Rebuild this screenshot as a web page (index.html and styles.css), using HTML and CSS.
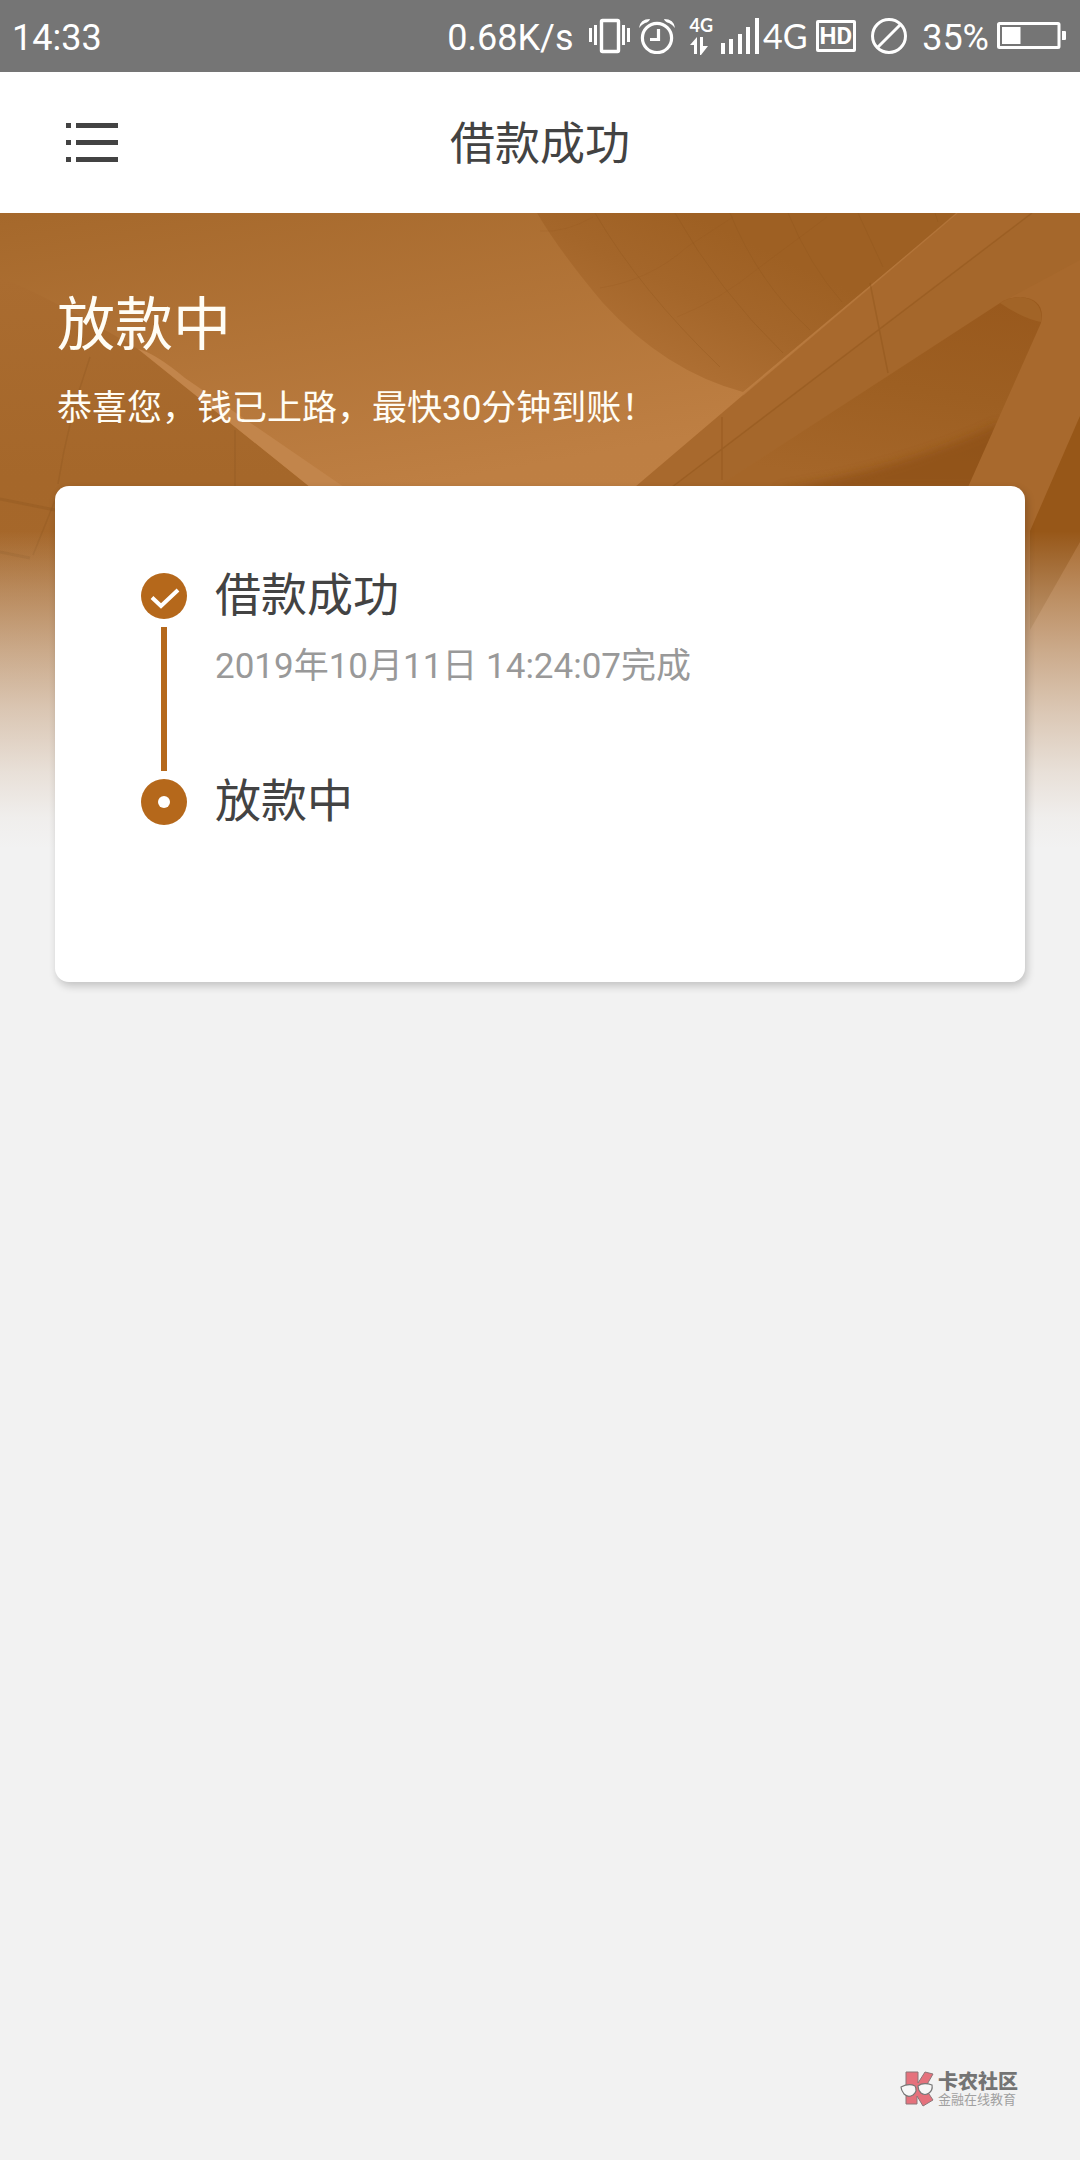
FILE: index.html
```html
<!DOCTYPE html>
<html lang="zh-CN">
<head>
<meta charset="utf-8">
<meta name="viewport" content="width=device-width, initial-scale=1">
<title>借款成功</title>
<link rel="stylesheet" href="styles.css">
</head>
<body>
<div class="page">
  <div class="status">
    <span class="status-text">14:33</span>
    <div class="status-right">
      <span class="status-text">0.68K/s</span>
      <div class="status-group">
        <svg width="42" height="36" viewBox="0 0 42 36" fill="#fff" aria-hidden="true">
          <path d="M0 10h3v14H0zM5 7h3v20H5zM33 7h3v20h-3zM38 10h3v14h-3z"/>
          <rect x="12.5" y="2.5" width="17" height="31" rx="1" fill="none" stroke="#fff" stroke-width="3.4"/>
        </svg>
        <svg width="36" height="36" viewBox="0 0 36 36" fill="none" stroke="#fff" stroke-width="3.2" aria-hidden="true">
          <circle cx="18" cy="20" r="14.6"/>
          <path d="M19.500 11v10.500h-8.500"/>
          <path d="M0 10Q1 1 11 1Q10 4 6 5Q2 7 0 10zM36 10Q35 1 25 1Q26 4 30 5Q34 7 36 10z" fill="#fff" stroke="none"/>
        </svg>
      </div>
      <div class="status-group">
        <div class="data">
          <span class="data-label">4G</span>
          <svg width="18" height="18" viewBox="0 0 18 18" fill="#fff" aria-hidden="true">
            <path d="M7 0v17H4V8H0zM10 0h3v9h5l-7 9h-1z"/>
          </svg>
        </div>
        <svg width="38" height="36" viewBox="0 0 38 36" fill="#fff" aria-hidden="true">
          <path d="M0 25h4v11H0zM8 21h4v15H8zM17 16h4v20h-4zM25 9h4v27h-4zM34 0h4v36h-4z"/>
        </svg>
        <span class="network">4G</span>
        <span class="hd">HD</span>
      </div>
      <svg width="36" height="36" viewBox="0 0 36 36" fill="none" stroke="#fff" stroke-width="3" aria-hidden="true">
        <circle cx="18" cy="18" r="16.500"/><path d="M6.500 29.500l23-23"/>
      </svg>
      <div class="status-group">
        <span class="status-text">35%</span>
        <svg width="69" height="28" viewBox="0 0 69 28" fill="#fff" aria-hidden="true">
          <rect x="1.500" y="1.500" width="60.500" height="24" rx="1" fill="none" stroke="#fff" stroke-width="3"/>
          <path d="M5 5h18.500v17H5zM65 9h3q1 0 1 1v7q0 1-1 1h-3z"/>
        </svg>
      </div>
    </div>
  </div>

  <header class="header">
    <button class="menu" type="button" aria-label="菜单">
      <svg width="52" height="40" viewBox="0 0 52 40" fill="#434343" aria-hidden="true">
        <path d="M0 0h5v5H0zM10 0h42v5H10zM0 17h5v5H0zM10 17h42v5H10zM0 34h5v5H0zM10 34h42v5H10z"/>
      </svg>
    </button>
    <h1 class="title">借款成功</h1>
  </header>

  <main class="main">
    <svg class="backdrop" viewBox="0 213 1080 635" preserveAspectRatio="none" aria-hidden="true">
      <defs>
        <linearGradient id="sky" x1="0" y1="0" x2=".3" y2="1">
          <stop offset="0" stop-color="#a5682b"/><stop offset=".5" stop-color="#be7f43"/><stop offset="1" stop-color="#c08044"/>
        </linearGradient>
        <linearGradient id="globe" x1="0" y1=".5" x2=".45" y2=".1">
          <stop offset="0" stop-color="#ae6f33"/><stop offset=".5" stop-color="#a4662a"/><stop offset="1" stop-color="#9e6023"/>
        </linearGradient>
        <linearGradient id="hollow" x1=".8" y1="0" x2=".5" y2="1">
          <stop offset="0" stop-color="#99591d"/><stop offset=".5" stop-color="#9d5f22"/><stop offset="1" stop-color="#a56629"/>
        </linearGradient>
        <linearGradient id="wall" x1="0" y1="0" x2="0" y2="1">
          <stop offset="0" stop-color="#aa6c30"/><stop offset=".35" stop-color="#a5672a"/><stop offset="1" stop-color="#a8682c"/>
        </linearGradient>
        <linearGradient id="fade" x1="0" y1="0" x2="0" y2="1">
          <stop offset=".5" stop-color="#f2f2f2" stop-opacity="0"/>
          <stop offset=".59" stop-color="#f2f2f2" stop-opacity=".24"/>
          <stop offset=".69" stop-color="#f2f2f2" stop-opacity=".48"/>
          <stop offset=".78" stop-color="#f2f2f2" stop-opacity=".68"/>
          <stop offset=".88" stop-color="#f2f2f2" stop-opacity=".87"/>
          <stop offset=".95" stop-color="#f2f2f2" stop-opacity=".97"/>
          <stop offset="1" stop-color="#f2f2f2"/>
        </linearGradient>
        <filter id="soft" x="-10%" y="-30%" width="120%" height="160%"><feGaussianBlur stdDeviation="5"/></filter>
        <clipPath id="hollow-clip"><path d="M717 487L1000 303Q1010 297 1021 297Q1046 299 1041 323L968 487z"/></clipPath>
      </defs>
      <rect y="213" width="1080" height="635" fill="url(#sky)"/>
      <path d="M537 213Q560 252 603 303Q665 371 743 392L957 213z" fill="url(#globe)"/>
      <g fill="none" stroke="#8f551d" stroke-opacity=".35">
        <path d="M595 213Q640 290 720 367M675 213Q718 290 783 353M730 213Q758 282 810 330M788 213Q810 266 842 302M858 213L883 267M935 213L938 222"/>
        <path d="M540 231Q565 233 593 217M600 288Q650 280 687 247L733 217M677 317Q720 300 760 267L827 217" stroke-opacity=".18"/>
      </g>
      <path d="M635 487L957 213H1080V848H635z" fill="#a8692d"/>
      <path d="M743 395L957 213" stroke="#b87a3f" stroke-opacity=".6" stroke-width="1.500"/>
      <path d="M672 487L1032 213L1080 213V260L1000 303L717 487z" fill="#a5672b"/>
      <path d="M672 487L1032 213M870 283L888 373M722 417V480" fill="none" stroke="#8c5219" stroke-opacity=".4" stroke-width="1.500"/>
      <path d="M717 487L1000 303Q1010 297 1021 297Q1046 299 1041 323L968 487z" fill="url(#hollow)"/>
      <path d="M1000 303Q1010 297 1021 297Q1044 300 1041 322Q1022 318 1000 303z" fill="#a26427"/>
      <g clip-path="url(#hollow-clip)">
        <path d="M775 490Q905 468 1000 423V490z" fill="#8d4f14" filter="url(#soft)" opacity=".75"/>
      </g>
      <path d="M1080 416L1030 531V630L1080 542z" fill="#975718"/>
      <path d="M0 277Q55 300 138 349L310 487V848H0z" fill="url(#wall)"/>
      <path d="M138 349Q155 353 185 378L344 487H310z" fill="#c2854b"/>
      <g fill="none" stroke="#8a511b" stroke-opacity=".28" stroke-width="1.500">
        <path d="M90 357Q68 420 58 484M235 430V487M60 488L33 555"/>
        <path d="M0 499L55 510M0 552L30 558" stroke-width="3"/>
      </g>
      <rect y="213" width="1080" height="636" fill="url(#fade)"/>
    </svg>

    <section class="intro">
      <h2 class="intro-title">放款中</h2>
      <p class="intro-text">恭喜您，钱已上路，最快30分钟到账！</p>
    </section>

    <ol class="card">
      <li class="step">
        <div class="rail">
          <svg width="46" height="46" viewBox="0 0 46 46" aria-hidden="true">
            <circle cx="23" cy="23" r="23" fill="#b5681b"/>
            <path d="M11 24.500l9 8.500l17-16" fill="none" stroke="#fff" stroke-width="4"/>
          </svg>
          <span class="line"></span>
        </div>
        <div class="step-body">
          <h3 class="step-title">借款成功</h3>
          <p class="step-time">2019年10月11日 14:24:07完成</p>
        </div>
      </li>
      <li class="step">
        <div class="rail">
          <svg width="46" height="46" viewBox="0 0 46 46" aria-hidden="true">
            <circle cx="23" cy="23" r="23" fill="#b5681b"/><circle cx="23" cy="23" r="6" fill="#fff"/>
          </svg>
        </div>
        <div class="step-body">
          <h3 class="step-title">放款中</h3>
        </div>
      </li>
    </ol>
  </main>

  <footer class="brand">
    <svg width="34" height="36" viewBox="0 0 34 36" aria-hidden="true">
      <path d="M6 1h12v11L25 1l8 2-8 14 8 12-10 6-6-10v8H6z" fill="#e5717c" stroke="#8c7779" stroke-width="1"/>
      <path d="M1 16q8-4 14-1q3 5-2 9q-5 3-9-1q-3-4-3-7zM18 15q5-4 14-1q1 5-3 8q-4 3-8 0q-3-3-3-7z" fill="#f7f7f7" stroke="#777" stroke-width="1.200"/>
    </svg>
    <div class="brand-text">
      <strong class="brand-name">卡农社区</strong>
      <span class="brand-sub">金融在线教育</span>
    </div>
  </footer>
</div>
</body>
</html>
```
FILE: styles.css
```css
* {
  box-sizing: border-box;
}

body,
h1,
h2,
h3,
p,
ol {
  margin: 0;
  padding: 0;
  font-weight: 400;
}

body {
  background: #f2f2f2;
  color: #434343;
  font-family: Roboto, "Noto Sans CJK SC", sans-serif;
}

svg {
  display: block;
  flex: none;
}

.page {
  display: flex;
  flex-direction: column;
  min-height: 100vh;
}

.status {
  display: flex;
  align-items: center;
  justify-content: space-between;
  height: 72px;
  padding: 0 14px 0 12px;
  background: #757575;
  color: #fff;
}

.status-right {
  display: flex;
  align-items: center;
  gap: 15px;
}

.status-group {
  display: flex;
  align-items: center;
  gap: 8px;
}

.status-text {
  padding-top: 3px;
  font-size: 36px;
  line-height: 40px;
}

.data {
  display: flex;
  flex-direction: column;
  gap: 4px;
}

.data-label {
  font-family: Lato, sans-serif;
  font-size: 18px;
  font-weight: 700;
  line-height: 16px;
}

.network {
  margin-left: -4px;
  font-family: Lato, sans-serif;
  font-size: 34px;
  line-height: 40px;
}

.hd {
  padding: 0 1px;
  border: 3px solid #fff;
  border-radius: 2px;
  font-size: 24px;
  font-weight: 700;
  line-height: 26px;
}

.header {
  display: grid;
  grid-template-columns: 1fr auto 1fr;
  align-items: center;
  height: 141px;
  padding: 0 66px;
  background: #fff;
}

.menu {
  justify-self: start;
  padding: 0;
  border: 0;
  background: none;
}

.title {
  padding-top: 4px;
  font-size: 45px;
  line-height: 64px;
}

.main {
  position: relative;
  padding: 72px 55px 0;
}

.backdrop {
  position: absolute;
  top: 0;
  left: 0;
  width: 100%;
  height: 635px;
}

.intro {
  position: relative;
  display: flex;
  flex-direction: column;
  gap: 20px;
  padding: 0 2px;
  color: #fffdf5;
}

.intro-title {
  font-size: 58px;
  line-height: 80px;
}

.intro-text {
  font-size: 35px;
  line-height: 48px;
}

.card {
  position: relative;
  margin-top: 53px;
  padding: 87px 86px 157px;
  border-radius: 14px;
  background: #fff;
  box-shadow: 2px 4px 8px rgba(0, 0, 0, 0.2);
  list-style: none;
}

.step {
  display: flex;
  gap: 28px;
}

.step:first-child {
  min-height: 206px;
}

.rail {
  display: flex;
  flex-direction: column;
  align-items: center;
}

.line {
  flex: 1;
  width: 6px;
  margin: 8px 0;
  background: #b5681b;
}

.step-body {
  display: flex;
  flex-direction: column;
  gap: 30px;
}

.step-title {
  padding-top: 2px;
  font-size: 46px;
  line-height: 40px;
}

.step-time {
  padding-top: 2px;
  color: #999;
  font-size: 35px;
  line-height: 40px;
}

.brand {
  display: flex;
  align-items: center;
  align-self: flex-end;
  gap: 4px;
  margin-top: auto;
  padding: 48px 62px 52px;
}

.brand-text {
  display: flex;
  flex-direction: column;
  padding-top: 3px;
}

.brand-name {
  color: #747474;
  font-size: 20px;
  font-weight: 900;
  line-height: 20px;
}

.brand-sub {
  color: #a0a0a0;
  font-size: 13px;
  line-height: 16px;
}
```
